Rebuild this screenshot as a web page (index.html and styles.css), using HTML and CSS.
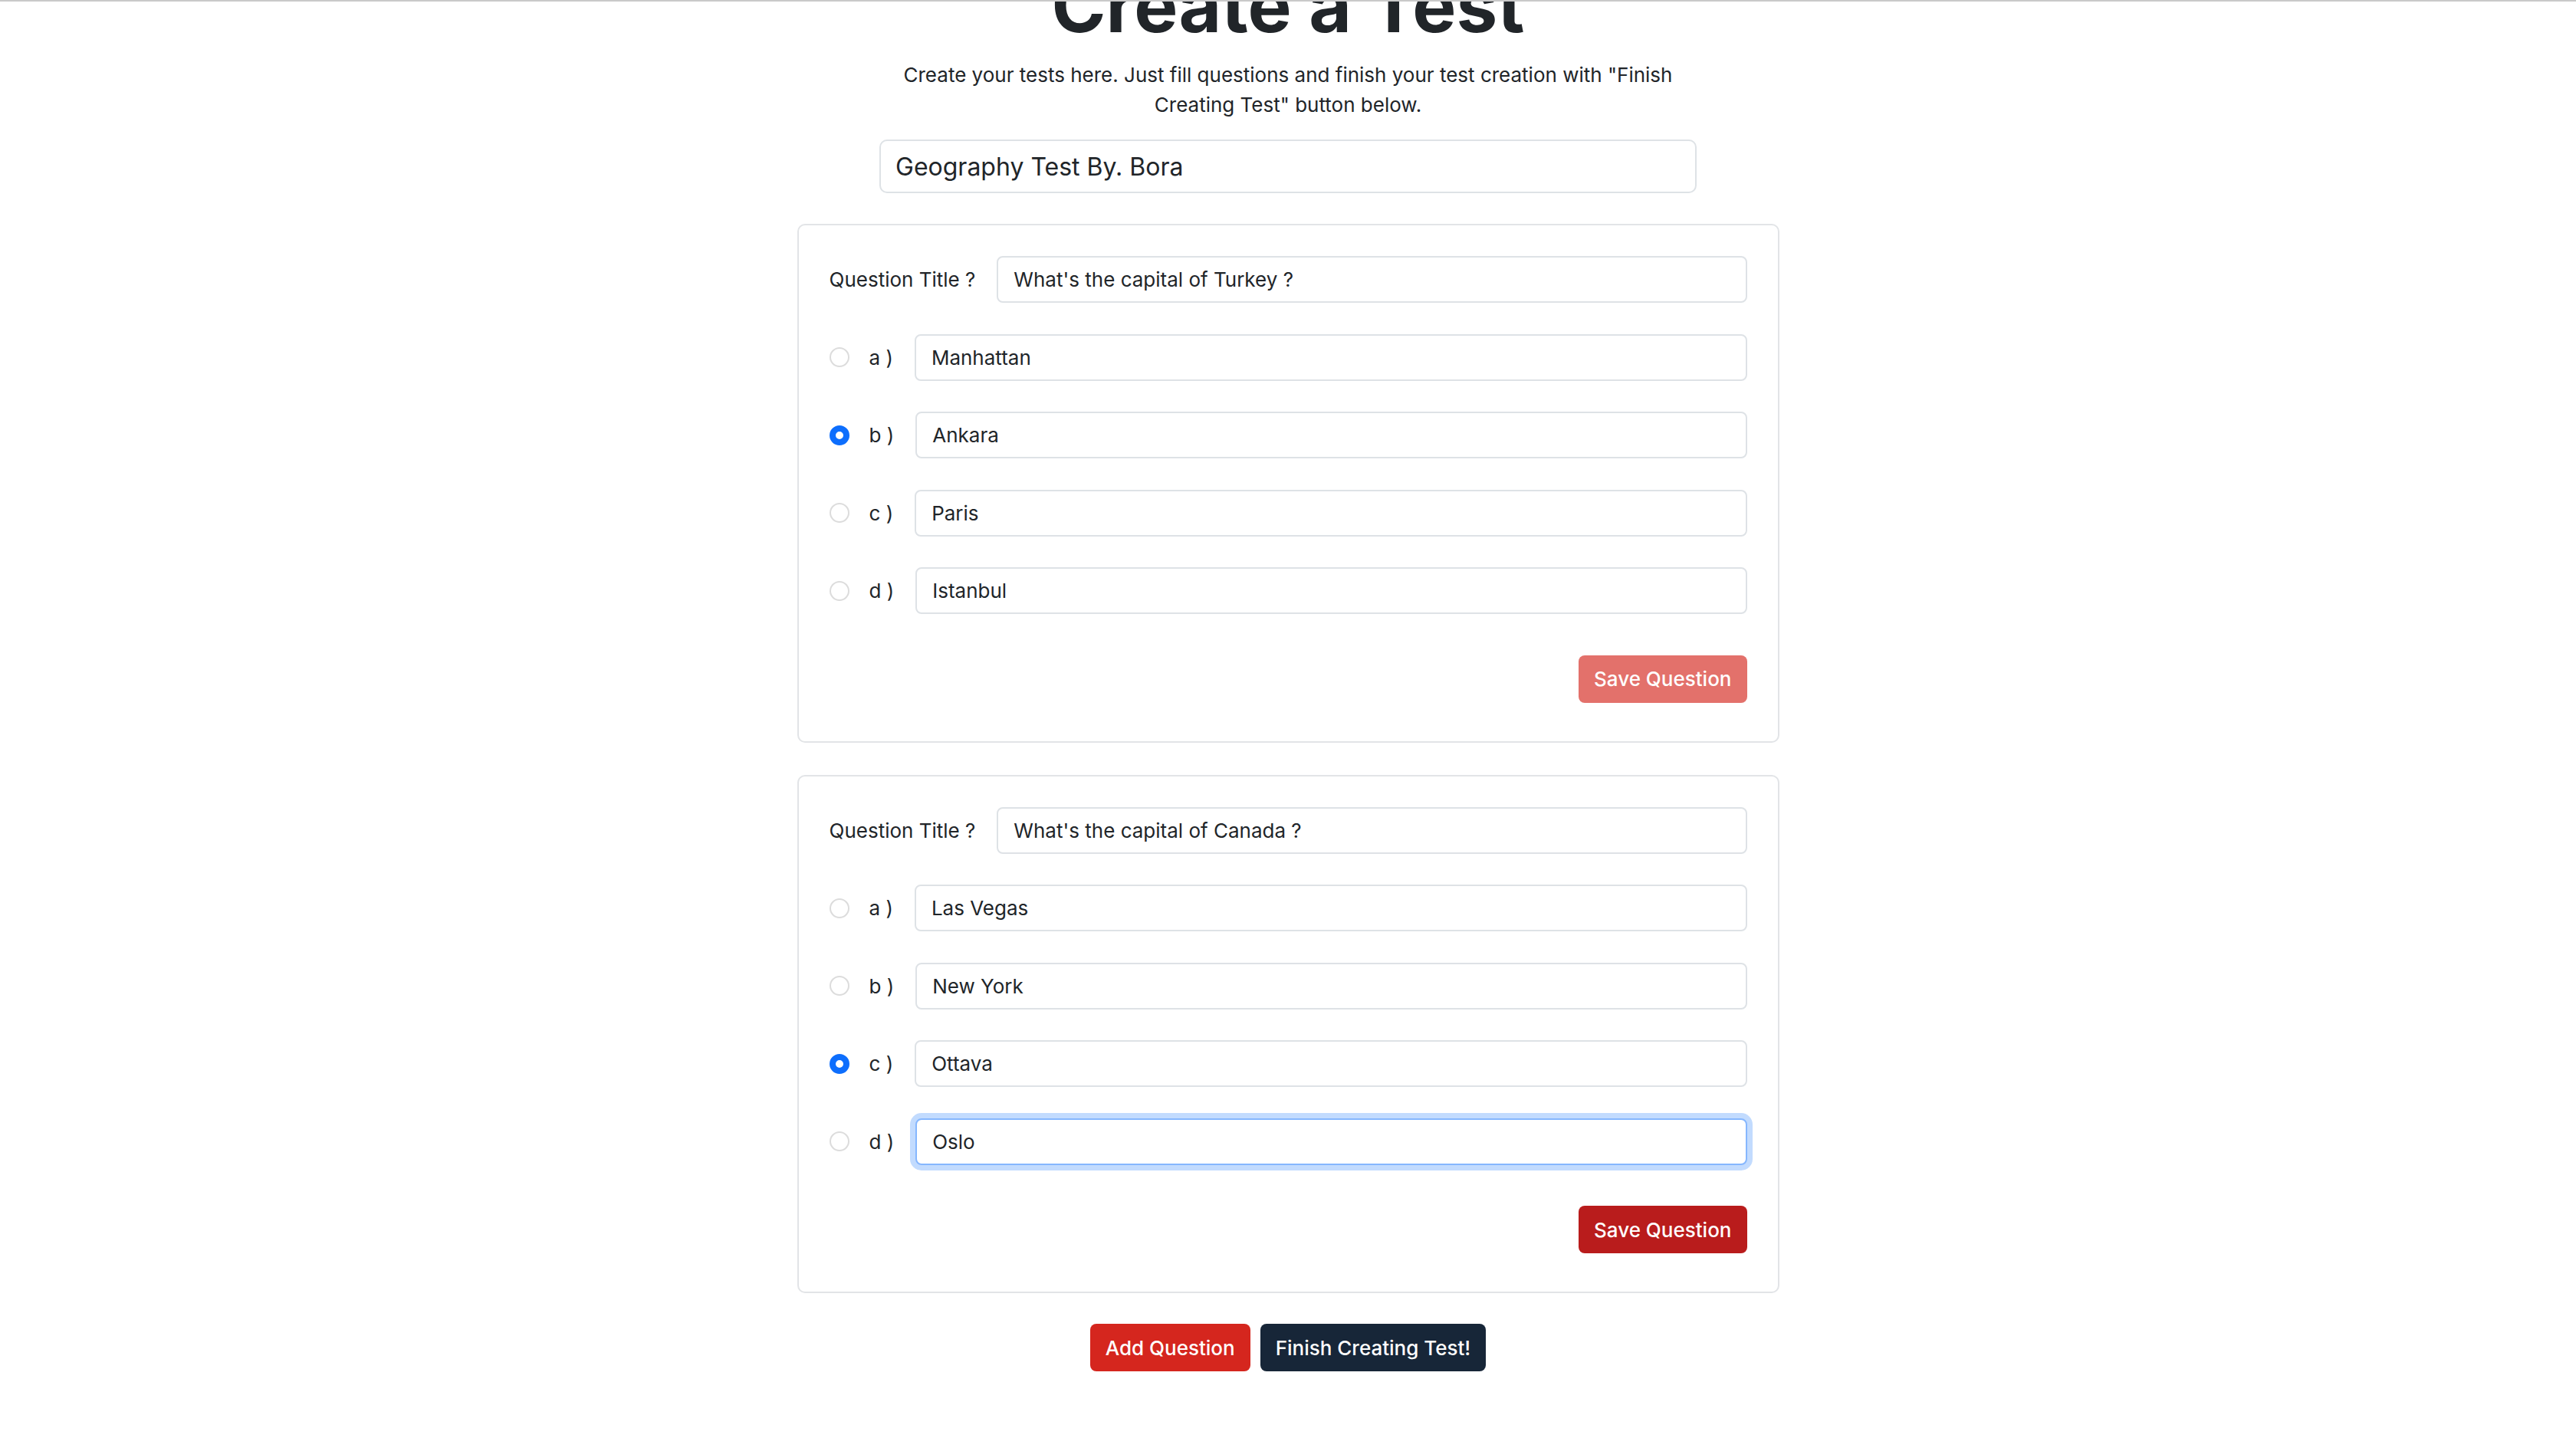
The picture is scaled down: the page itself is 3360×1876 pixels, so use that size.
FILE: index.html
```html
<!DOCTYPE html>
<html lang="en">
<head>
<meta charset="utf-8">
<title>Create a Test</title>
<link rel="stylesheet" href="styles.css">
</head>
<body>
<div class="page">
  <main class="main">
    <h1 class="title">Create a Test</h1>
    <p class="lead">Create your tests here. Just fill questions and finish your test creation with "Finish Creating Test" button below.</p>
    <input class="test-name" type="text" value="Geography Test By. Bora">

    <section class="card">
      <div class="row">
        <label class="row-label">Question Title ?</label>
        <input class="field" type="text" value="What's the capital of Turkey ?">
      </div>
      <div class="row">
        <input class="radio" type="radio" name="q1">
        <span class="opt-label">a )</span>
        <input class="field" type="text" value="Manhattan">
      </div>
      <div class="row">
        <input class="radio" type="radio" name="q1" checked>
        <span class="opt-label">b )</span>
        <input class="field" type="text" value="Ankara">
      </div>
      <div class="row">
        <input class="radio" type="radio" name="q1">
        <span class="opt-label">c )</span>
        <input class="field" type="text" value="Paris">
      </div>
      <div class="row">
        <input class="radio" type="radio" name="q1">
        <span class="opt-label">d )</span>
        <input class="field" type="text" value="Istanbul">
      </div>
      <div class="card-actions">
        <button class="btn btn-save is-muted" type="button">Save Question</button>
      </div>
    </section>

    <section class="card">
      <div class="row">
        <label class="row-label">Question Title ?</label>
        <input class="field" type="text" value="What's the capital of Canada ?">
      </div>
      <div class="row">
        <input class="radio" type="radio" name="q2">
        <span class="opt-label">a )</span>
        <input class="field" type="text" value="Las Vegas">
      </div>
      <div class="row">
        <input class="radio" type="radio" name="q2">
        <span class="opt-label">b )</span>
        <input class="field" type="text" value="New York">
      </div>
      <div class="row">
        <input class="radio" type="radio" name="q2" checked>
        <span class="opt-label">c )</span>
        <input class="field" type="text" value="Ottava">
      </div>
      <div class="row">
        <input class="radio" type="radio" name="q2">
        <span class="opt-label">d )</span>
        <input class="field is-focused" type="text" value="Oslo">
      </div>
      <div class="card-actions">
        <button class="btn btn-save" type="button">Save Question</button>
      </div>
    </section>

    <div class="actions">
      <button class="btn btn-add" type="button">Add Question</button>
      <button class="btn btn-finish" type="button">Finish Creating Test!</button>
    </div>
  </main>
</div>
</body>
</html>
```
FILE: styles.css
```css
* {
  box-sizing: border-box;
}

html, body {
  margin: 0;
  padding: 0;
  background: #ffffff;
}

body {
  font-family: Inter, "Noto Sans", "Liberation Sans", sans-serif;
  color: #212529;
}

.page {
  border-top: 2px solid #c9c9c9;
  overflow: hidden;
  min-height: 1876px;
}

.main {
  width: 1281px;
  margin: 0 auto;
  display: flex;
  flex-direction: column;
  align-items: center;
  padding-bottom: 80px;
}

.title {
  margin: -43px 0 0;
  font-size: 96px;
  line-height: 96px;
  font-weight: 700;
  color: #212529;
}

.lead {
  width: 1066px;
  margin: 23px 0 0;
  font-size: 26px;
  line-height: 39px;
  text-align: center;
}

.test-name {
  width: 1066px;
  height: 70px;
  margin-top: 26px;
  padding: 0 19px;
  border: 2px solid #dee2e6;
  border-radius: 10px;
  font-family: inherit;
  font-size: 32px;
  color: #212529;
  background: #fff;
  outline: none;
}

.card {
  align-self: stretch;
  margin-top: 40px;
  border: 2px solid #e2e4e7;
  border-radius: 10px;
  padding: 40px 40px 50px;
  display: flex;
  flex-direction: column;
  gap: 40.5px;
}

.card + .card {
  margin-top: 42px;
}

.row {
  display: flex;
  align-items: center;
  height: 61px;
}

.row-label {
  font-size: 26px;
  margin-right: 28px;
  white-space: nowrap;
}

.radio {
  appearance: none;
  -webkit-appearance: none;
  width: 26px;
  height: 26px;
  margin: 0 26px 0 0;
  border: 2px solid #dcdcdc;
  border-radius: 50%;
  background: #fff;
  flex: none;
}

.radio:checked {
  border: 8px solid #0d6efd;
  background: #fff;
}

.opt-label {
  font-size: 26px;
  margin-right: 28px;
  white-space: nowrap;
}

.field {
  flex: 1;
  min-width: 0;
  height: 61px;
  padding: 0 20px;
  border: 2px solid #dee2e6;
  border-radius: 8px;
  font-family: inherit;
  font-size: 26px;
  color: #212529;
  background: #fff;
  outline: none;
}

.field.is-focused {
  border-color: #86b7fe;
  box-shadow: 0 0 0 7px rgba(13, 110, 253, 0.25);
}

.card-actions {
  display: flex;
  justify-content: flex-end;
  margin-top: 13px;
}

.btn {
  height: 62px;
  padding: 0 20px;
  border: none;
  border-radius: 8px;
  font-family: inherit;
  font-size: 26px;
  font-weight: 500;
  color: #ffffff;
  cursor: pointer;
}

.btn-save {
  background: #b91c1c;
}

.btn-save.is-muted {
  background: #e3716b;
}

.actions {
  display: flex;
  gap: 13px;
  margin-top: 40px;
}

.btn-add {
  background: #d5261e;
}

.btn-finish {
  background: #172638;
}
```
